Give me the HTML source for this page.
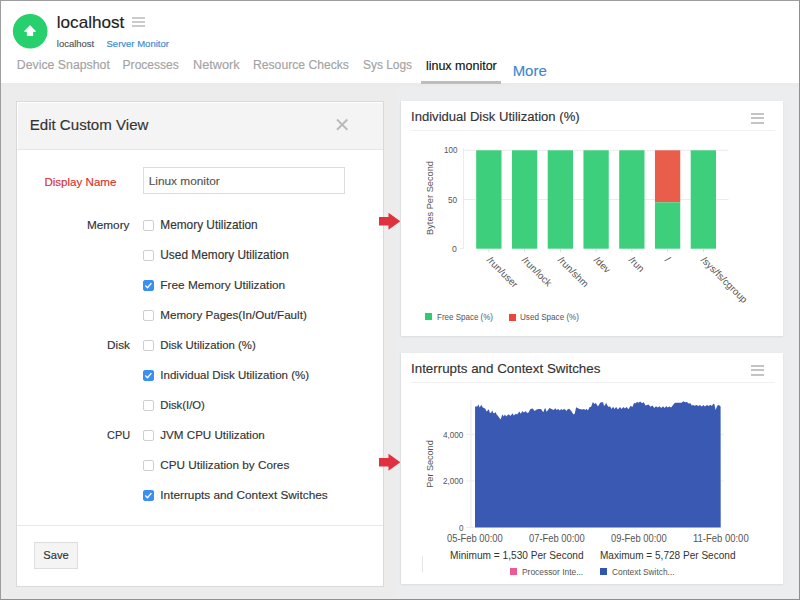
<!DOCTYPE html>
<html><head><meta charset="utf-8"><title>linux monitor</title>
<style>
html,body{margin:0;padding:0}
body{width:800px;height:600px;overflow:hidden;position:relative;background:#ecedef;font-family:"Liberation Sans",sans-serif}
.t{position:absolute;white-space:nowrap;line-height:1;font-family:"Liberation Sans",sans-serif;-webkit-text-stroke:0.15px currentColor}
.a{position:absolute}
.cb{position:absolute;left:143px;width:9px;height:9px;border:1px solid #cfcfcf;border-radius:2px;background:#fff}
.cb.on{background:#3a8ff0;border-color:#3a8ff0}
</style></head><body>
<div class="a" style="left:0;top:83px;width:396px;height:517px;background:#ebeceb"></div>
<div class="a" style="left:0;top:83px;width:800px;height:4px;background:#eaebea"></div>
<div class="a" style="left:0;top:0;width:800px;height:83px;background:#fff"></div>
<svg class="a" style="left:0;top:0" width="60" height="60" viewBox="0 0 60 60"><circle cx="30.2" cy="31.2" r="17.3" fill="#26d06d"/><path d="M30 25.9 L35.3 31.3 L32.6 31.3 L32.6 35.5 L27.4 35.5 L27.4 31.3 L24.7 31.3 Z" fill="#fff" stroke="#fff" stroke-width="1.1" stroke-linejoin="round"/></svg>
<div class="t" style="left:56.80px;top:14px;font-size:17.12px;color:#222;">localhost</div>
<div class="a" style="left:132px;top:17px;width:12.7px;height:2px;background:#cbcbcb"></div>
<div class="a" style="left:132px;top:21px;width:12.7px;height:2px;background:#cbcbcb"></div>
<div class="a" style="left:132px;top:25px;width:12.7px;height:2px;background:#cbcbcb"></div>
<div class="t" style="left:56.80px;top:39px;font-size:9.47px;color:#555;">localhost</div>
<div class="t" style="left:106.50px;top:39px;font-size:9.53px;color:#3a87cf;">Server Monitor</div>
<div class="t" style="left:16.85px;top:59px;font-size:12.30px;color:#a3a3a3;">Device Snapshot</div>
<div class="t" style="left:122.60px;top:59px;font-size:12.04px;color:#a3a3a3;">Processes</div>
<div class="t" style="left:193.00px;top:59px;font-size:12.72px;color:#a3a3a3;">Network</div>
<div class="t" style="left:253.00px;top:59px;font-size:12.16px;color:#a3a3a3;">Resource Checks</div>
<div class="t" style="left:363.00px;top:60px;font-size:11.91px;color:#a3a3a3;">Sys Logs</div>
<div class="t" style="left:425.90px;top:60px;font-size:12.50px;color:#111;">linux monitor</div>
<div class="t" style="left:512.70px;top:64px;font-size:14.93px;color:#3a87cf;">More</div>
<div class="a" style="left:421px;top:81px;width:80px;height:3px;background:#bdbdbd"></div>
<div class="a" style="left:16px;top:101px;width:366px;height:484px;border:1px solid #d9d9d9;background:#fff"></div>
<div class="a" style="left:17px;top:102px;width:365px;height:46px;background:#f4f4f4;border-top:1px solid #fff;border-left:1px solid #fff;border-bottom:1px solid #e6e6e6"></div>
<div class="t" style="left:29.70px;top:117px;font-size:15.08px;color:#333;">Edit Custom View</div>
<svg class="a" style="left:330px;top:112px" width="24" height="24" viewBox="0 0 24 24"><path d="M7 7.5 L17.3 17.7 M17.3 7.5 L7 17.7" stroke="#b9b9b9" stroke-width="1.9"/></svg>
<div class="t" style="left:44.40px;top:177px;font-size:11.58px;color:#d9302c;">Display Name</div>
<div class="a" style="left:143px;top:167px;width:200px;height:25px;border:1px solid #dcdcdc;background:#fff"></div>
<div class="t" style="left:148.75px;top:176px;font-size:11.83px;color:#555;">Linux monitor</div>
<div class="t" style="left:87.30px;top:220px;font-size:11.59px;color:#333;transform-origin:0 0;transform:scaleX(1.0149);">Memory</div>
<div class="cb" style="top:220px"></div>
<div class="t" style="left:160.30px;top:220px;font-size:11.85px;color:#333;">Memory Utilization</div>
<div class="cb" style="top:250px"></div>
<div class="t" style="left:160.30px;top:250px;font-size:11.86px;color:#333;">Used Memory Utilization</div>
<div class="cb on" style="top:280px"><svg style="position:absolute;left:-1px;top:-1px" width="11" height="11" viewBox="0 0 11 11"><path d="M2.3 5.6 L4.5 7.7 L8.4 3.1" fill="none" stroke="#fff" stroke-width="1.4"/></svg></div>
<div class="t" style="left:160.30px;top:280px;font-size:11.84px;color:#333;">Free Memory Utilization</div>
<div class="cb" style="top:310px"></div>
<div class="t" style="left:160.30px;top:309px;font-size:11.61px;color:#333;">Memory Pages(In/Out/Fault)</div>
<div class="t" style="left:106.80px;top:340px;font-size:11.59px;color:#333;transform-origin:0 0;transform:scaleX(1.0188);">Disk</div>
<div class="cb" style="top:340px"></div>
<div class="t" style="left:160.30px;top:340px;font-size:11.39px;color:#333;">Disk Utilization (%)</div>
<div class="cb on" style="top:370px"><svg style="position:absolute;left:-1px;top:-1px" width="11" height="11" viewBox="0 0 11 11"><path d="M2.3 5.6 L4.5 7.7 L8.4 3.1" fill="none" stroke="#fff" stroke-width="1.4"/></svg></div>
<div class="t" style="left:160.30px;top:370px;font-size:11.56px;color:#333;">Individual Disk Utilization (%)</div>
<div class="cb" style="top:400px"></div>
<div class="t" style="left:160.30px;top:400px;font-size:11.31px;color:#333;">Disk(I/O)</div>
<div class="t" style="left:106.70px;top:430px;font-size:11.59px;color:#333;transform-origin:0 0;transform:scaleX(0.9433);">CPU</div>
<div class="cb" style="top:430px"></div>
<div class="t" style="left:160.30px;top:429px;font-size:11.62px;color:#333;">JVM CPU Utilization</div>
<div class="cb" style="top:460px"></div>
<div class="t" style="left:160.30px;top:459px;font-size:11.72px;color:#333;">CPU Utilization by Cores</div>
<div class="cb on" style="top:490px"><svg style="position:absolute;left:-1px;top:-1px" width="11" height="11" viewBox="0 0 11 11"><path d="M2.3 5.6 L4.5 7.7 L8.4 3.1" fill="none" stroke="#fff" stroke-width="1.4"/></svg></div>
<div class="t" style="left:160.30px;top:490px;font-size:11.82px;color:#333;">Interrupts and Context Switches</div>
<div class="a" style="left:17px;top:525px;width:366px;height:1px;background:#e9e9e9"></div>
<div class="a" style="left:34px;top:542px;width:42px;height:25px;border:1px solid #dedede;background:#f4f4f4"></div>
<div class="t" style="left:43.30px;top:550px;font-size:11.18px;color:#333;">Save</div>
<svg class="a" style="left:375px;top:209.4px" width="30" height="24" viewBox="0 0 30 24"><path d="M4 8 L13.5 8 L13.5 3.7 L25.3 12.2 L13.5 20.7 L13.5 16.5 L4 16.5 Z" fill="#e0313f"/></svg>
<svg class="a" style="left:375px;top:450.3px" width="30" height="24" viewBox="0 0 30 24"><path d="M4 8 L13.5 8 L13.5 3.7 L25.3 12.2 L13.5 20.7 L13.5 16.5 L4 16.5 Z" fill="#e0313f"/></svg>
<div class="a" style="left:401px;top:101px;width:382px;height:235px;background:#fff;box-shadow:0 1px 2px rgba(0,0,0,0.07),-1px 0 1px rgba(0,0,0,0.03)"></div>
<div class="a" style="left:401px;top:353px;width:382px;height:231px;background:#fff;box-shadow:0 1px 2px rgba(0,0,0,0.07),-1px 0 1px rgba(0,0,0,0.03)"></div>
<div class="t" style="left:411.00px;top:110px;font-size:13.08px;color:#333;">Individual Disk Utilization (%)</div>
<div class="t" style="left:411.00px;top:362px;font-size:13.37px;color:#333;">Interrupts and Context Switches</div>
<div class="a" style="left:751px;top:113px;width:13.3px;height:2px;background:#c4c4c4"></div>
<div class="a" style="left:751px;top:117px;width:13.3px;height:2px;background:#c4c4c4"></div>
<div class="a" style="left:751px;top:122px;width:13.3px;height:2px;background:#c4c4c4"></div>
<div class="a" style="left:751px;top:365px;width:13.3px;height:2px;background:#c4c4c4"></div>
<div class="a" style="left:751px;top:369px;width:13.3px;height:2px;background:#c4c4c4"></div>
<div class="a" style="left:751px;top:374px;width:13.3px;height:2px;background:#c4c4c4"></div>
<div class="a" style="left:410.5px;top:130px;width:364px;height:1px;background:#f0f0f0"></div>
<div class="a" style="left:410.5px;top:382px;width:364px;height:1px;background:#f0f0f0"></div>
<svg class="a" style="left:0;top:0" width="800" height="600" viewBox="0 0 800 600"><rect x="463.5" y="149.8" width="265" height="1" fill="#ececec"/><rect x="463.5" y="199.0" width="265" height="1" fill="#ececec"/><rect x="463" y="148" width="1" height="101" fill="#ececec"/><rect x="476.20" y="150.3" width="25.3" height="98.4" fill="#3dcf7b"/><rect x="488.40" y="249" width="1" height="3" fill="#dcdcdc"/><rect x="511.95" y="150.3" width="25.3" height="98.4" fill="#3dcf7b"/><rect x="524.15" y="249" width="1" height="3" fill="#dcdcdc"/><rect x="547.70" y="150.3" width="25.3" height="98.4" fill="#3dcf7b"/><rect x="559.90" y="249" width="1" height="3" fill="#dcdcdc"/><rect x="583.45" y="150.3" width="25.3" height="98.4" fill="#3dcf7b"/><rect x="595.65" y="249" width="1" height="3" fill="#dcdcdc"/><rect x="619.20" y="150.3" width="25.3" height="98.4" fill="#3dcf7b"/><rect x="631.40" y="249" width="1" height="3" fill="#dcdcdc"/><rect x="654.95" y="150.3" width="25.3" height="52" fill="#e95e4b"/><rect x="654.95" y="202.3" width="25.3" height="46.4" fill="#3dcf7b"/><rect x="667.15" y="249" width="1" height="3" fill="#dcdcdc"/><rect x="690.70" y="150.3" width="25.3" height="98.4" fill="#3dcf7b"/><rect x="702.90" y="249" width="1" height="3" fill="#dcdcdc"/><rect x="470.5" y="400" width="1" height="128" fill="#ececec"/><rect x="466" y="527" width="9" height="1" fill="#ececec"/><rect x="460" y="248" width="4" height="1" fill="#ececec"/><rect x="466" y="433.8" width="258" height="1" fill="#ededed"/><rect x="466" y="480.5" width="258" height="1" fill="#ededed"/><path d="M475 527.5 L475.07 406.30 L475.70 406.75 L476.30 406.30 L477.00 406.75 L478.50 404.60 L479.60 407.60 L480.90 405.40 L481.80 405.20 L482.70 407.60 L484.00 408.00 L485.30 408.70 L486.60 411.60 L487.90 410.20 L488.80 409.20 L489.70 412.40 L491.00 412.90 L492.30 410.20 L493.20 412.90 L494.50 413.30 L495.60 412.00 L496.50 414.20 L498.00 415.90 L500.60 419.40 L502.40 414.20 L503.70 416.40 L505.00 414.60 L506.30 416.40 L507.60 415.00 L508.90 414.20 L510.20 415.90 L512.70 413.30 L513.70 415.50 L515.90 413.70 L517.20 414.60 L519.30 411.60 L520.70 413.70 L522.50 411.10 L523.80 412.40 L526.00 411.10 L526.90 412.90 L528.60 412.40 L530.40 408.90 L532.60 408.50 L534.70 411.10 L535.60 410.20 L536.75 409.50 L538.50 408.90 L541.10 409.10 L542.00 410.40 L543.30 412.20 L544.60 408.70 L545.50 408.20 L546.40 411.70 L548.10 410.00 L549.40 408.10 L551.60 408.90 L553.40 410.00 L555.60 408.20 L556.40 410.00 L558.20 409.10 L559.90 410.40 L561.20 408.90 L562.60 410.00 L563.90 409.10 L565.20 409.50 L566.50 410.90 L567.40 409.50 L569.10 408.70 L570.90 410.40 L573.50 414.40 L574.80 413.50 L576.10 407.20 L577.90 408.20 L579.60 409.10 L582.20 409.50 L584.00 408.90 L585.30 410.00 L586.60 408.70 L587.90 410.40 L589.70 406.90 L591.00 406.90 L592.90 402.10 L594.50 403.90 L595.80 403.00 L598.00 406.50 L600.20 402.80 L601.30 402.30 L603.10 402.30 L603.90 405.40 L604.80 405.40 L606.10 402.70 L607.40 405.40 L608.75 407.10 L610.10 406.20 L611.40 408.90 L613.10 406.70 L614.40 408.90 L616.20 407.10 L617.90 409.60 L620.10 407.10 L621.40 408.90 L623.60 406.90 L624.90 408.40 L626.70 406.90 L628.40 409.30 L630.60 405.80 L632.40 407.10 L634.10 402.70 L635.00 403.60 L637.20 401.90 L638.50 402.70 L640.25 401.40 L642.00 403.20 L643.75 402.30 L645.50 405.40 L648.60 404.50 L650.30 406.70 L652.50 405.40 L654.25 408.00 L656.00 406.20 L657.75 407.50 L659.50 406.20 L661.25 408.00 L663.00 406.20 L664.75 408.00 L666.30 406.00 L667.60 407.60 L669.40 406.40 L671.10 407.60 L674.60 402.90 L675.90 402.70 L681.60 402.70 L683.40 401.20 L685.10 402.30 L686.90 402.10 L688.60 403.40 L690.40 403.20 L691.70 405.50 L693.00 405.10 L694.75 405.80 L696.50 405.10 L698.25 406.00 L700.00 404.90 L701.75 406.40 L703.50 405.10 L704.80 406.40 L707.00 405.10 L708.75 406.00 L710.50 404.70 L711.80 406.00 L713.60 403.40 L714.40 404.20 L715.60 409.90 L716.60 407.30 L717.90 404.90 L719.25 405.30 L720.60 406.40 L720.7 527.5 Z" fill="#3959b3"/><rect x="422" y="556" width="1" height="16.5" fill="#e4e6ea"/></svg>
<div class="t" style="left:443.70px;top:145px;font-size:9.78px;color:#555555;-webkit-text-stroke:0;transform-origin:0 0;transform:scaleX(0.8220);">100</div>
<div class="t" style="left:447.90px;top:195px;font-size:9.78px;color:#555555;-webkit-text-stroke:0;transform-origin:0 0;transform:scaleX(0.8459);">50</div>
<div class="t" style="left:452.20px;top:244px;font-size:9.78px;color:#555555;-webkit-text-stroke:0;transform-origin:0 0;transform:scaleX(0.8846);">0</div>
<div class="t" style="left:431px;top:198px;font-size:9.24px;color:#555555;-webkit-text-stroke:0;transform:translate(-50%,-50%) rotate(-90deg)">Bytes Per Second</div>
<div class="t" style="left:491.55px;top:255px;font-size:9.9px;color:#555555;-webkit-text-stroke:0;transform-origin:0 0;transform:rotate(45deg)">/run/user</div>
<div class="t" style="left:527.25px;top:255px;font-size:9.9px;color:#555555;-webkit-text-stroke:0;transform-origin:0 0;transform:rotate(45deg)">/run/lock</div>
<div class="t" style="left:562.95px;top:255px;font-size:9.9px;color:#555555;-webkit-text-stroke:0;transform-origin:0 0;transform:rotate(45deg)">/run/shm</div>
<div class="t" style="left:598.65px;top:255px;font-size:9.9px;color:#555555;-webkit-text-stroke:0;transform-origin:0 0;transform:rotate(45deg)">/dev</div>
<div class="t" style="left:634.35px;top:255px;font-size:9.9px;color:#555555;-webkit-text-stroke:0;transform-origin:0 0;transform:rotate(45deg)">/run</div>
<div class="t" style="left:670.05px;top:255px;font-size:9.9px;color:#555555;-webkit-text-stroke:0;transform-origin:0 0;transform:rotate(45deg)">/</div>
<div class="t" style="left:705.75px;top:255px;font-size:9.9px;color:#555555;-webkit-text-stroke:0;transform-origin:0 0;transform:rotate(45deg)">/sys/fs/cgroup</div>
<div class="a" style="left:424.5px;top:313.3px;width:7px;height:7px;background:#2dcc6f"></div>
<div class="t" style="left:436.60px;top:313px;font-size:9.08px;color:#555555;-webkit-text-stroke:0;transform-origin:0 0;transform:scaleX(0.8809);">Free Space (%)</div>
<div class="a" style="left:508.8px;top:314px;width:7px;height:7px;background:#e8473a"></div>
<div class="t" style="left:520.30px;top:313px;font-size:9.08px;color:#555555;-webkit-text-stroke:0;transform-origin:0 0;transform:scaleX(0.8927);">Used Space (%)</div>
<div class="t" style="left:442.85px;top:430px;font-size:9.78px;color:#555555;-webkit-text-stroke:0;transform-origin:0 0;transform:scaleX(0.8338);">4,000</div>
<div class="t" style="left:442.85px;top:476px;font-size:9.78px;color:#555555;-webkit-text-stroke:0;transform-origin:0 0;transform:scaleX(0.8338);">2,000</div>
<div class="t" style="left:458.80px;top:523px;font-size:9.78px;color:#555555;-webkit-text-stroke:0;transform-origin:0 0;transform:scaleX(0.8293);">0</div>
<div class="t" style="left:431px;top:463.5px;font-size:9.09px;color:#555555;-webkit-text-stroke:0;transform:translate(-50%,-50%) rotate(-90deg)">Per Second</div>
<div class="t" style="left:447.45px;top:534px;font-size:10.34px;color:#555555;-webkit-text-stroke:0;transform-origin:0 0;transform:scaleX(0.9058);">05-Feb 00:00</div>
<div class="t" style="left:529.05px;top:534px;font-size:10.34px;color:#555555;-webkit-text-stroke:0;transform-origin:0 0;transform:scaleX(0.9058);">07-Feb 00:00</div>
<div class="t" style="left:611.35px;top:534px;font-size:10.34px;color:#555555;-webkit-text-stroke:0;transform-origin:0 0;transform:scaleX(0.9058);">09-Feb 00:00</div>
<div class="t" style="left:693.15px;top:534px;font-size:10.34px;color:#555555;-webkit-text-stroke:0;transform-origin:0 0;transform:scaleX(0.9173);">11-Feb 00:00</div>
<div class="t" style="left:449.80px;top:551px;font-size:10.34px;color:#333;-webkit-text-stroke:0;transform-origin:0 0;transform:scaleX(0.9798);">Minimum = 1,530 Per Second</div>
<div class="t" style="left:599.50px;top:551px;font-size:10.34px;color:#333;-webkit-text-stroke:0;transform-origin:0 0;transform:scaleX(0.9733);">Maximum = 5,728 Per Second</div>
<div class="a" style="left:510.3px;top:568.3px;width:6.6px;height:7px;background:#ec5a93"></div>
<div class="t" style="left:521.80px;top:567px;font-size:9.64px;color:#555555;-webkit-text-stroke:0;transform-origin:0 0;transform:scaleX(0.8723);">Processor Inte...</div>
<div class="a" style="left:600.1px;top:568.3px;width:6.8px;height:7px;background:#3256b0"></div>
<div class="t" style="left:611.80px;top:567px;font-size:9.64px;color:#555555;-webkit-text-stroke:0;transform-origin:0 0;transform:scaleX(0.8658);">Context Switch...</div>
<div class="a" style="left:0;top:0;width:798px;height:598px;border:1px solid #9d9d9d;border-bottom-color:#8f8f8f;border-right-color:#8f8f8f"></div>
</body></html>
